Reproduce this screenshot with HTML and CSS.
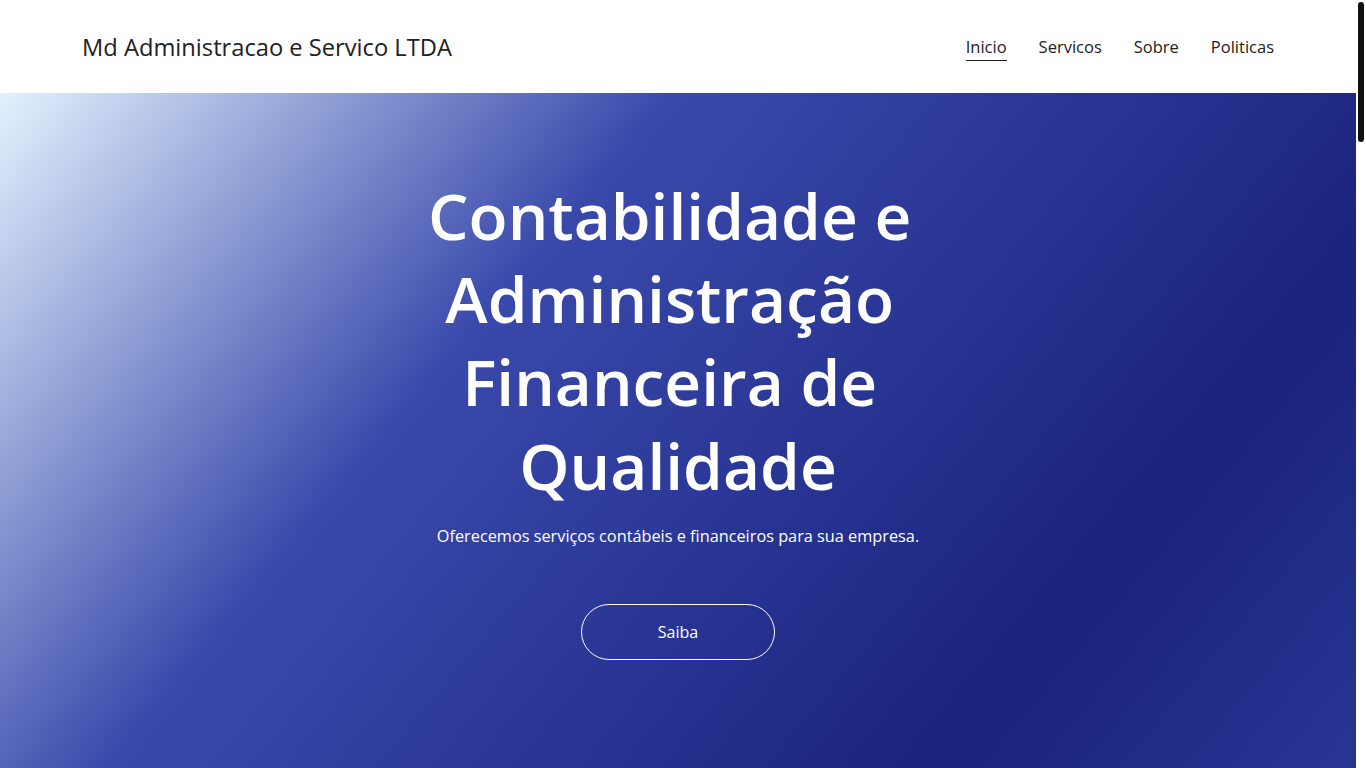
FILE: index.html
```html
<!DOCTYPE html>
<html lang="pt-BR">
<head>
<meta charset="utf-8">
<title>Md Administracao e Servico LTDA</title>
<link rel="stylesheet" href="styles.css">
</head>
<body>
<div class="page">
  <header class="site-header">
    <div class="brand">Md Administracao e Servico LTDA</div>
    <nav class="nav">
      <a class="nav-link active" href="#inicio">Inicio</a>
      <a class="nav-link" href="#servicos">Servicos</a>
      <a class="nav-link" href="#sobre">Sobre</a>
      <a class="nav-link" href="#politicas">Politicas</a>
    </nav>
  </header>
  <main>
    <section class="hero" id="inicio">
      <h1 class="hero-title">Contabilidade e Administração Financeira de Qualidade</h1>
      <p class="hero-sub">Oferecemos serviços contábeis e financeiros para sua empresa.</p>
      <a class="hero-btn" href="#servicos">Saiba</a>
    </section>
    <section class="block" id="servicos">
      <h2 class="block-title">Servicos</h2>
      <p class="block-text">Contabilidade, administração financeira e consultoria para empresas.</p>
    </section>
    <section class="block" id="sobre">
      <h2 class="block-title">Sobre</h2>
      <p class="block-text">Md Administracao e Servico LTDA.</p>
    </section>
    <section class="block" id="politicas">
      <h2 class="block-title">Politicas</h2>
      <p class="block-text">Políticas de privacidade e termos de uso.</p>
    </section>
  </main>
</div>
<aside class="scrollbar" aria-hidden="true"><div class="scrollbar-thumb"></div></aside>
</body>
</html>
```

FILE: styles.css
```css
html, body {
  margin: 0;
  padding: 0;
}
body {
  font-family: "Open Sans", "Noto Sans", sans-serif;
  color: #212121;
  background: #ffffff;
  display: flex;
  align-items: flex-start;
}
.page {
  flex: 1;
  min-width: 0;
}
.scrollbar {
  flex: none;
  position: sticky;
  top: 0;
  width: 10px;
  height: 100vh;
  background: #ffffff;
  box-sizing: border-box;
  padding: 2px 2px 0;
}
.scrollbar-thumb {
  width: 6px;
  height: 140px;
  border-radius: 3px;
  background: #111111;
}
.site-header {
  height: 93px;
  box-sizing: border-box;
  padding: 0 82px;
  display: flex;
  align-items: center;
  justify-content: space-between;
  background: #ffffff;
}
.brand {
  font-size: 23.7px;
  color: #212121;
}
.nav {
  display: flex;
  gap: 32px;
  margin-top: -2px;
}
.nav-link {
  font-size: 16.5px;
  color: #212121;
  text-decoration: none;
  padding: 4px 0 2px;
  border-bottom: 1px solid transparent;
}
.nav-link.active {
  border-bottom-color: #212121;
}
.hero {
  height: 675px;
  box-sizing: border-box;
  padding: 81px 20px 0;
  display: flex;
  flex-direction: column;
  align-items: center;
  text-align: center;
  color: #ffffff;
  background: linear-gradient(130deg, #e3f2fd 0%, #3949ab 35%, #1a237e 78%, #283593 100%);
}
.hero-title {
  margin: 0;
  max-width: 640px;
  font-size: 64px;
  line-height: 1.3;
  font-weight: 600;
  white-space: break-spaces;
}
.hero-sub {
  margin: 18px 0 0;
  font-size: 16.3px;
}
.hero-btn {
  margin-top: 57px;
  width: 194px;
  height: 56px;
  box-sizing: border-box;
  border: 1px solid #ffffff;
  border-radius: 28px;
  display: flex;
  align-items: center;
  justify-content: center;
  color: #ffffff;
  text-decoration: none;
  font-size: 16px;
}
.block {
  height: 1109px;
  padding: 80px 82px;
  box-sizing: border-box;
}
.block-title {
  margin: 0 0 16px;
  font-size: 40px;
  font-weight: 600;
}
.block-text {
  margin: 0;
  font-size: 16px;
}
```
